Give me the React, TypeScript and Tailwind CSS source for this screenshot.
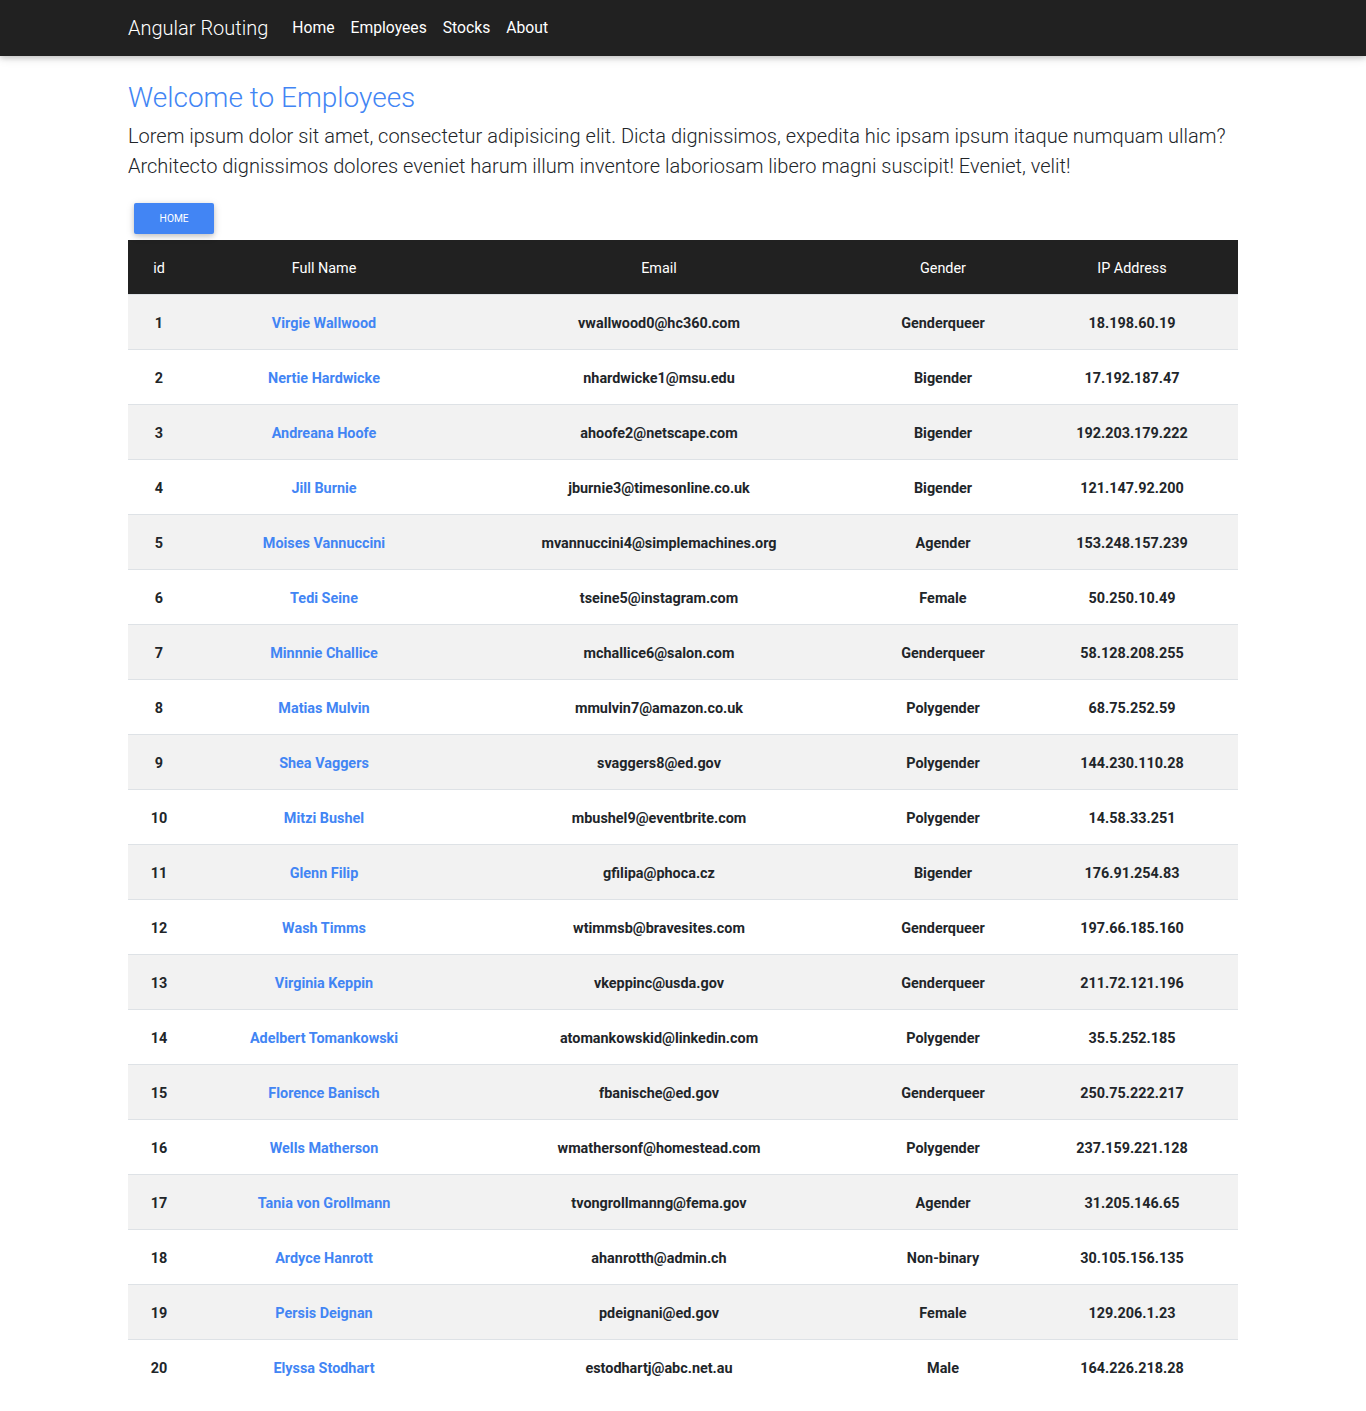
import React from "react";

const rows: [number, string, string, string, string][] = [
  [1, "Virgie Wallwood", "vwallwood0@hc360.com", "Genderqueer", "18.198.60.19"],
  [2, "Nertie Hardwicke", "nhardwicke1@msu.edu", "Bigender", "17.192.187.47"],
  [3, "Andreana Hoofe", "ahoofe2@netscape.com", "Bigender", "192.203.179.222"],
  [4, "Jill Burnie", "jburnie3@timesonline.co.uk", "Bigender", "121.147.92.200"],
  [5, "Moises Vannuccini", "mvannuccini4@simplemachines.org", "Agender", "153.248.157.239"],
  [6, "Tedi Seine", "tseine5@instagram.com", "Female", "50.250.10.49"],
  [7, "Minnnie Challice", "mchallice6@salon.com", "Genderqueer", "58.128.208.255"],
  [8, "Matias Mulvin", "mmulvin7@amazon.co.uk", "Polygender", "68.75.252.59"],
  [9, "Shea Vaggers", "svaggers8@ed.gov", "Polygender", "144.230.110.28"],
  [10, "Mitzi Bushel", "mbushel9@eventbrite.com", "Polygender", "14.58.33.251"],
  [11, "Glenn Filip", "gfilipa@phoca.cz", "Bigender", "176.91.254.83"],
  [12, "Wash Timms", "wtimmsb@bravesites.com", "Genderqueer", "197.66.185.160"],
  [13, "Virginia Keppin", "vkeppinc@usda.gov", "Genderqueer", "211.72.121.196"],
  [14, "Adelbert Tomankowski", "atomankowskid@linkedin.com", "Polygender", "35.5.252.185"],
  [15, "Florence Banisch", "fbanische@ed.gov", "Genderqueer", "250.75.222.217"],
  [16, "Wells Matherson", "wmathersonf@homestead.com", "Polygender", "237.159.221.128"],
  [17, "Tania von Grollmann", "tvongrollmanng@fema.gov", "Agender", "31.205.146.65"],
  [18, "Ardyce Hanrott", "ahanrotth@admin.ch", "Non-binary", "30.105.156.135"],
  [19, "Persis Deignan", "pdeignani@ed.gov", "Female", "129.206.1.23"],
  [20, "Elyssa Stodhart", "estodhartj@abc.net.au", "Male", "164.226.218.28"],
];

export default function App() {
  return (
    <div className="min-h-[1411px] bg-white font-['Roboto',sans-serif] text-[#212529]">
      <nav className="h-14 bg-[#212121] shadow-[0_2px_5px_0_rgba(0,0,0,0.16),0_2px_10px_0_rgba(0,0,0,0.12)]">
        <div className="mx-auto flex h-full w-[1110px] items-center">
          <span className="mr-4 text-[20px] font-light text-white">Angular Routing</span>
          <div className="flex items-center">
            {["Home", "Employees", "Stocks", "About"].map((l) => (
              <span key={l} className="px-2 text-[15.7px] font-normal text-white">
                {l}
              </span>
            ))}
          </div>
        </div>
      </nav>
      <div className="mx-auto w-[1110px]">
        <h3 className="mt-[25px] mb-[6px] text-[28px] font-light leading-[1.2] text-[#4285f4]">
          Welcome to Employees
        </h3>
        <p className="mb-4 text-[20px] font-light leading-[30px]">
          Lorem ipsum dolor sit amet, consectetur adipisicing elit. Dicta dignissimos, expedita hic ipsam ipsum itaque numquam ullam? Architecto dignissimos dolores eveniet harum illum inventore laboriosam libero magni suscipit! Eveniet, velit!
        </p>
        <button className="m-[6px] rounded-[2px] bg-[#4285f4] px-[25.6px] py-2 text-[10.24px] font-normal uppercase leading-[15px] text-white shadow-[0_2px_5px_0_rgba(0,0,0,0.16),0_2px_10px_0_rgba(0,0,0,0.12)]">
          Home
        </button>
        <table className="w-[1110px] table-fixed border-collapse text-center text-[14.4px]">
          <colgroup>
            <col className="w-[62px]" />
            <col className="w-[268px]" />
            <col className="w-[402px]" />
            <col className="w-[166px]" />
            <col className="w-[212px]" />
          </colgroup>
          <thead>
            <tr className="bg-[#212121] text-white">
              {["id", "Full Name", "Email", "Gender", "IP Address"].map((h) => (
                <th key={h} className="pt-[18px] pb-[14px] font-normal leading-[22px]">
                  {h}
                </th>
              ))}
            </tr>
          </thead>
          <tbody>
            {rows.map((r) => (
              <tr
                key={r[0]}
                className={`border-t border-[#dee2e6] ${r[0] % 2 === 1 ? "bg-[#f2f2f2]" : "bg-white"}`}
              >
                <td className="pt-[18px] pb-[14px] font-bold leading-[22px]">{r[0]}</td>
                <td className="pt-[18px] pb-[14px] font-bold leading-[22px] text-[#4285f4]">{r[1]}</td>
                <td className="pt-[18px] pb-[14px] font-bold leading-[22px]">{r[2]}</td>
                <td className="pt-[18px] pb-[14px] font-bold leading-[22px]">{r[3]}</td>
                <td className="pt-[18px] pb-[14px] font-bold leading-[22px]">{r[4]}</td>
              </tr>
            ))}
          </tbody>
        </table>
      </div>
    </div>
  );
}
